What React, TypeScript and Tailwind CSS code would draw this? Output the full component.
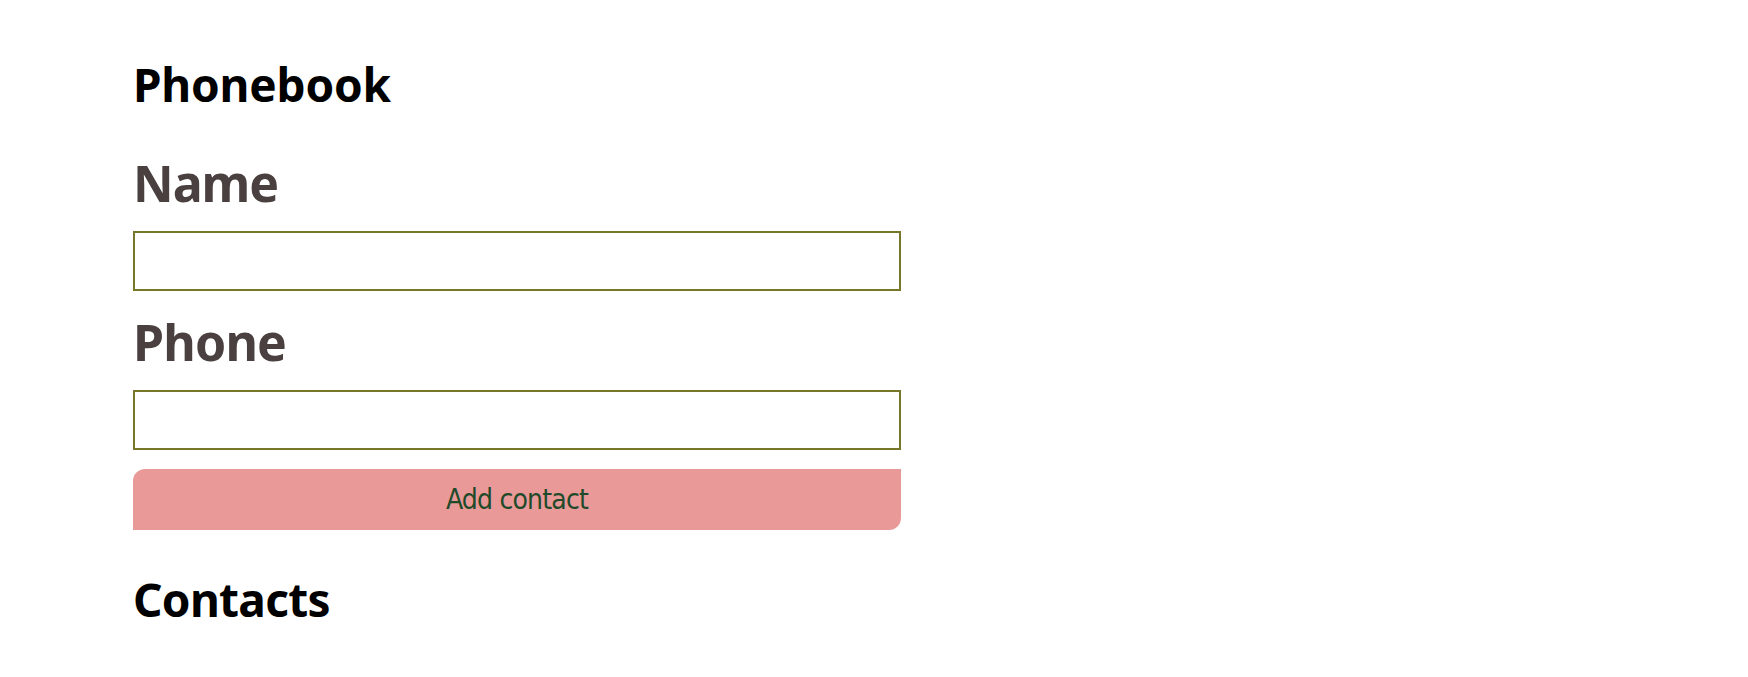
import React from "react";

export default function App() {
  return (
    <div className="min-h-screen bg-white pl-[133px] pt-[61px]" style={{ fontFamily: '"Noto Sans", "Open Sans", sans-serif' }}>
      <h2 className="text-[46px] font-bold leading-none tracking-[-0.2px] text-black">Phonebook</h2>
      <form className="w-[768px]">
        <label className="block mt-[51px] text-[50px] font-bold leading-none tracking-[-1px] text-[#4a4040]">Name</label>
        <input className="block mt-[23px] h-[60px] w-[768px] border-2 border-[#777729] bg-white outline-none" type="text" />
        <label className="block mt-[26px] text-[50px] font-bold leading-none tracking-[-0.8px] text-[#4a4040]">Phone</label>
        <input className="block mt-[23px] h-[60px] w-[768px] border-2 border-[#777729] bg-white outline-none" type="text" />
        <button
          type="button"
          className="mt-[19px] flex h-[61px] w-[768px] items-center justify-center rounded-tl-[12px] rounded-br-[12px] bg-[#ea9999] text-[28px] leading-none tracking-[-0.8px] text-[#1f4a2a]"
          style={{ fontFamily: '"DejaVu Sans Condensed", "Liberation Sans Narrow", "DejaVu Sans", sans-serif' }}
        >
          Add contact
        </button>
      </form>
      <h2 className="mt-[46px] text-[46px] font-bold leading-none tracking-[-0.7px] text-black">Contacts</h2>
    </div>
  );
}
